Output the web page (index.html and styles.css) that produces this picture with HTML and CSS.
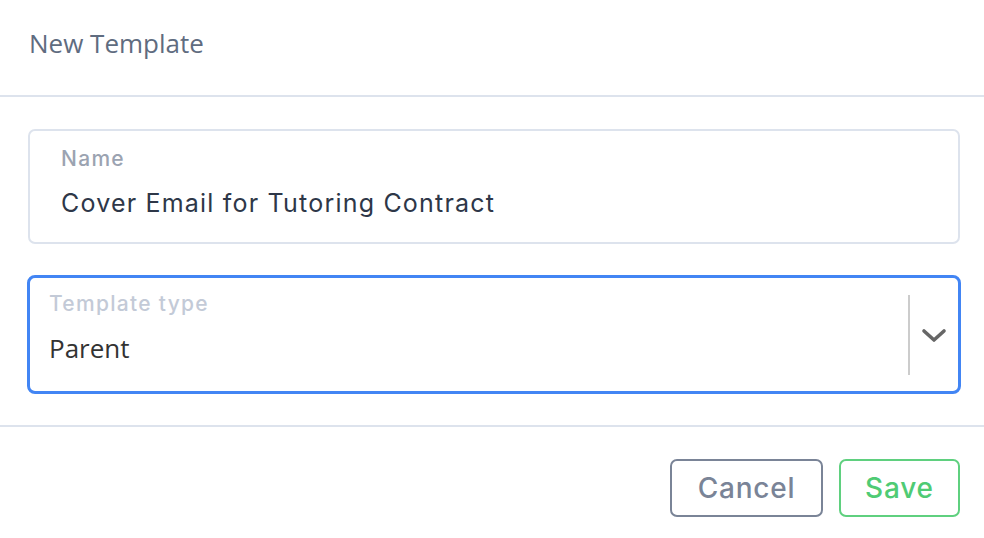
FILE: index.html
```html
<!DOCTYPE html>
<html>
<head>
<meta charset="utf-8">
<link rel="stylesheet" href="styles.css">
</head>
<body>
<div class="modal">
  <div class="modal-header">
    <h1 class="modal-title">New Template</h1>
  </div>
  <div class="modal-body">
    <div class="field">
      <label class="field-label">Name</label>
      <div class="field-value">Cover Email for Tutoring Contract</div>
    </div>
    <div class="select">
      <div class="select-main">
        <label class="select-label">Template type</label>
        <div class="select-value">Parent</div>
      </div>
      <div class="select-indicators">
        <span class="select-sep"></span>
        <svg class="chevron" width="26" height="16" viewBox="0 0 26 16"><path d="M3 3 L13 12 L23 3" fill="none" stroke="#666" stroke-width="3.6" stroke-linecap="round" stroke-linejoin="round"/></svg>
      </div>
    </div>
  </div>
  <div class="modal-footer">
    <button class="btn btn-cancel">Cancel</button>
    <button class="btn btn-save">Save</button>
  </div>
</div>
</body>
</html>
```
FILE: styles.css
```css
html, body {
  margin: 0;
  padding: 0;
  background: #fff;
}
.modal {
  width: 984px;
  height: 538px;
  display: flex;
  flex-direction: column;
}
.modal-header {
  border-bottom: 2px solid #dde3ed;
  box-sizing: border-box;
  height: 97px;
  display: flex;
  align-items: flex-start;
}
.modal-title {
  margin: 26px 0 0 29px;
  font-family: "Open Sans", sans-serif;
  font-weight: 400;
  font-size: 26px;
  line-height: 34px;
  color: #5f6c80;
}
.modal-body {
  padding: 32px 24px 31px 28px;
  display: flex;
  flex-direction: column;
  gap: 31px;
  border-bottom: 2px solid #dde3ed;
}
.field {
  height: 115px;
  box-sizing: border-box;
  border: 2px solid #dde3ed;
  border-radius: 7px;
  padding: 15px 31px 0 31px;
  display: flex;
  flex-direction: column;
}
.field-label {
  font-family: "Inter", sans-serif;
  font-weight: 500;
  font-size: 21px;
  letter-spacing: 1.3px;
  line-height: 26px;
  color: #9ba3b1;
}
.field-value {
  margin-top: 15px;
  font-family: "Inter", sans-serif;
  font-size: 25px;
  letter-spacing: 1.2px;
  line-height: 32px;
  color: #2e3748;
}
.select {
  margin: 0 -1px 0 -1px;
  height: 119px;
  box-sizing: border-box;
  border: 3px solid #4285f4;
  border-radius: 8px;
  display: flex;
  align-items: stretch;
}
.select-main {
  flex: 1;
  padding: 13px 0 0 19px;
  display: flex;
  flex-direction: column;
}
.select-label {
  font-family: "Inter", sans-serif;
  font-weight: 500;
  font-size: 21px;
  letter-spacing: 1.3px;
  line-height: 26px;
  color: #c3cad7;
}
.select-value {
  margin-top: 14px;
  font-family: "Open Sans", sans-serif;
  font-size: 26px;
  line-height: 34px;
  color: #333333;
}
.select-indicators {
  display: flex;
  align-items: center;
  padding: 0 11px 0 0;
}
.select-sep {
  width: 2px;
  height: 80px;
  background: #cccccc;
  margin-right: 11px;
}
.chevron {
  display: block;
  margin-top: 2px;
}
.modal-footer {
  display: flex;
  justify-content: flex-end;
  gap: 16px;
  padding: 32px 24px 0 0;
}
.btn {
  height: 58px;
  box-sizing: border-box;
  border-radius: 7px;
  background: #fff;
  font-family: "Inter", sans-serif;
  font-weight: 500;
  font-size: 28px;
  letter-spacing: 0.8px;
  padding: 0;
  cursor: pointer;
}
.btn-cancel {
  width: 153px;
  border: 2px solid #7a8497;
  color: #7a8497;
}
.btn-save {
  width: 121px;
  border: 2px solid #5fd07f;
  color: #4fcb74;
}
```
